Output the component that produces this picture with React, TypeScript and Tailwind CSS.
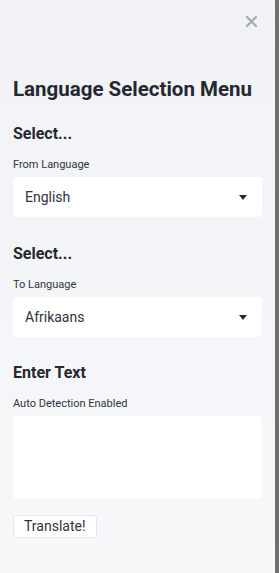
import React from 'react'

function Caret() {
  return (
    <svg width="8" height="5" viewBox="0 0 8 5" className="shrink-0">
      <path d="M0 0 L8 0 L4 5 Z" fill="#262730" />
    </svg>
  )
}

function SelectBox({ value }: { value: string }) {
  return (
    <div className="flex h-[40px] items-center justify-between rounded-[4px] bg-white pl-[12px] pr-[15px]">
      <span className="text-[14px] text-[#31333f]">{value}</span>
      <Caret />
    </div>
  )
}

export default function App() {
  return (
    <div
      className="flex h-[573px] w-[279px]"
      style={{ fontFamily: 'Roboto, "Liberation Sans", sans-serif' }}
    >
      {/* Sidebar */}
      <div className="flex w-[275px] flex-col bg-gradient-to-b from-[#f0f2f6] to-[#f8f8fa] px-[13px]">
        {/* Close */}
        <div className="flex h-[42px] items-center justify-end pr-[5px]">
          <svg width="11" height="11" viewBox="0 0 11 11">
            <path d="M1 1 L10 10 M10 1 L1 10" stroke="#a3a8b4" strokeWidth="2.2" strokeLinecap="round" />
          </svg>
        </div>

        <h1 className="mt-[34px] text-[20.5px] font-bold leading-[26px] text-[#262730]">
          Language Selection Menu
        </h1>

        {/* From */}
        <h2 className="mt-[21px] text-[16px] font-bold leading-[22px] text-[#262730]">Select...</h2>
        <p className="mt-[13px] text-[11px] leading-[14px] text-[#31333f]">From Language</p>
        <div className="mt-[5px]">
          <SelectBox value="English" />
        </div>

        {/* To */}
        <h2 className="mt-[26px] text-[16px] font-bold leading-[22px] text-[#262730]">Select...</h2>
        <p className="mt-[13px] text-[11px] leading-[14px] text-[#31333f]">To Language</p>
        <div className="mt-[5px]">
          <SelectBox value="Afrikaans" />
        </div>

        {/* Text */}
        <h2 className="mt-[25px] text-[16px] font-bold leading-[22px] text-[#262730]">Enter Text</h2>
        <p className="mt-[13px] text-[11px] leading-[14px] text-[#31333f]">Auto Detection Enabled</p>
        <div className="mt-[5px] h-[83px] rounded-[4px] bg-white" />

        <div className="mt-[15px]">
          <button className="rounded-[3px] border border-[#e6e7eb] bg-white px-[10px] py-[1px] text-[14px] leading-[19px] text-[#31333f]">
            Translate!
          </button>
        </div>
      </div>

      {/* Scroll strip */}
      <div className="w-[4px] bg-[#707070]" />
    </div>
  )
}
